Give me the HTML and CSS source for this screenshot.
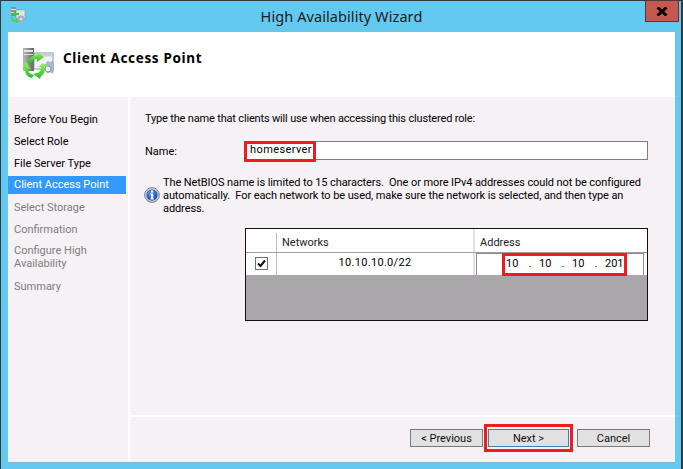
FILE: index.html
```html
<!DOCTYPE html>
<html lang="en">
<head>
<meta charset="utf-8">
<title>High Availability Wizard</title>
<link rel="stylesheet" href="styles.css">
</head>
<body>
<div class="window">
  <div class="titlebar">
    <svg class="title-icon" viewBox="0 0 16 16" width="16" height="16">
      <rect x="1" y="0" width="5" height="9" fill="#8a8f8c"/>
      <rect x="1" y="2" width="5" height="1" fill="#e6e6e6"/>
      <rect x="1" y="5" width="5" height="1" fill="#d5d5d5"/>
      <rect x="6" y="3" width="9" height="8" fill="#dfe6ea" stroke="#8b959b" stroke-width=".6"/>
      <circle cx="11" cy="12" r="3.4" fill="#9db1c2"/>
      <circle cx="11" cy="12" r="1.3" fill="#dfe6ea"/>
      <path d="M2 7 L6 4 L6 6 L9 6 L9 8 L6 8 L6 10 Z" fill="#3fc337"/>
      <path d="M1 10 L3 10 Q3 13 6 13 L6 11 L9 14 L6 16 L6 15 Q1 15 1 10 Z" fill="#4bd53c"/>
    </svg>
    <div class="title">High Availability Wizard</div>
    <div class="close"><svg viewBox="0 0 12 9" width="12" height="9"><path d="M1.500 0.500 L10.500 8.500 M10.500 0.500 L1.500 8.500" stroke="#000" stroke-width="3"/></svg></div>
  </div>
  <div class="client">
    <header class="banner">
      <svg class="banner-icon" viewBox="0 0 32 32" width="32" height="32">
        <defs>
          <linearGradient id="srv" x1="0" x2="1" y1="0" y2="0"><stop offset="0" stop-color="#b9bdb8"/><stop offset="1" stop-color="#5d625f"/></linearGradient>
          <linearGradient id="arr" x1="0" x2="0" y1="0" y2="1"><stop offset="0" stop-color="#a4ee5e"/><stop offset="1" stop-color="#1dbb2a"/></linearGradient>
        </defs>
        <rect x="1" y="1" width="11" height="23" fill="url(#srv)"/>
        <rect x="2" y="3" width="9" height="2" fill="#e2e5e2"/>
        <rect x="2" y="7" width="9" height="1" fill="#dcdedc"/>
        <rect x="12" y="6" width="19" height="16" fill="#f2f5f7" stroke="#8d979f"/>
        <rect x="12.5" y="6.5" width="18" height="3" fill="#c6d0d8"/>
        <path d="M21 18 l3.4-1 1-2.6 2.6 1 2.6-1 1 2.6 .4 3-.4 3.4-1 2.6-2.6-1-2.6 1-1-2.6-3.400-1z" fill="#a9bccd" stroke="#8ea2b4" stroke-width=".6"/>
        <circle cx="26" cy="22" r="3" fill="#eef2f6" stroke="#7f93a6"/>
        <path d="M6 15 Q8 8 15 8 L15 5 L22 10 L15 15 L15 12 Q10 12 10 16 Z" fill="url(#arr)"/>
        <path d="M0 22 L4 15 L9 22 L6 22 Q6 27 12 28 L10 31 Q3 30 3 22 Z" fill="url(#arr)"/>
        <path d="M14 26 Q19 26 19 20 L16 20 L21 16 L26 20 L23 20 Q23 28 19 29 L18 32 L11 27 Z" fill="url(#arr)"/>
      </svg>
      <h1 class="banner-title">Client Access Point</h1>
    </header>
    <div class="body">
      <nav class="nav">
        <div class="step">Before You Begin</div>
        <div class="step">Select Role</div>
        <div class="step">File Server Type</div>
        <div class="step active">Client Access Point</div>
        <div class="step off">Select Storage</div>
        <div class="step off">Confirmation</div>
        <div class="step off multi">Configure High Availability</div>
        <div class="step off">Summary</div>
      </nav>
      <main class="pane">
        <div class="content">
          <p class="intro">Type the name that clients will use when accessing this clustered role:</p>
          <div class="name-row">
            <label class="name-label">Name:</label>
            <div class="name-input">homeserver<span class="mark mark-name"></span></div>
          </div>
          <div class="info">
            <svg class="info-icon" viewBox="0 0 16 16" width="16" height="16">
              <defs><radialGradient id="ib" cx=".4" cy=".35" r=".7"><stop offset="0" stop-color="#5d9cf0"/><stop offset="1" stop-color="#123fa8"/></radialGradient></defs>
              <circle cx="8" cy="8" r="7.4" fill="#c6ccd6" stroke="#7d8794"/>
              <circle cx="8" cy="8" r="5.6" fill="url(#ib)"/>
              <rect x="7" y="3.500" width="2.200" height="2" fill="#fff"/>
              <path d="M6.300 6.500 H9.200 V11.500 H10 V12.500 H6.300 V11.500 H7 V7.500 H6.300 Z" fill="#fff"/>
            </svg>
            <p class="info-text">The NetBIOS name is limited to 15 characters.&nbsp; One or more IPv4 addresses could not be configured<br>automatically.&nbsp; For each network to be used, make sure the network is selected, and then type an<br>address.</p>
          </div>
          <div class="grid">
            <div class="grid-head">
              <div class="col-check"></div>
              <div class="col-net head-cell">Networks</div>
              <div class="col-addr head-cell">Address</div>
            </div>
            <div class="grid-row">
              <div class="col-check cell-check">
                <svg viewBox="0 0 13 13" width="13" height="13"><rect x=".5" y=".5" width="12" height="12" fill="#fff" stroke="#707070"/><path d="M3 6.500 L5.500 9 L10 3.500" fill="none" stroke="#111" stroke-width="2"/></svg>
              </div>
              <div class="col-net cell-net">10.10.10.0/22</div>
              <div class="col-addr cell-addr">
                <div class="ip">
                  <span class="oct">10</span><span class="dot">.</span><span class="oct">10</span><span class="dot">.</span><span class="oct">10</span><span class="dot">.</span><span class="oct">201</span>
                  <span class="mark mark-ip"></span>
                </div>
              </div>
            </div>
          </div>
        </div>
        <footer class="footer">
          <button class="btn">&lt; Previous</button>
          <button class="btn primary">Next &gt;<span class="mark mark-next"></span></button>
          <button class="btn">Cancel</button>
        </footer>
      </main>
    </div>
  </div>
</div>
</body>
</html>
```
FILE: styles.css
```css
* { box-sizing: border-box; }
html, body { margin: 0; padding: 0; }
body { width: 683px; height: 469px; overflow: hidden; font-family: "Roboto", "Noto Sans", sans-serif; font-size: 11px; color: #000; }
p, h1 { margin: 0; }

.window { width: 683px; height: 469px; background: #63c9f0; border-top: 1px solid #2f3a40; border-left: 1px solid #2f3a40; border-right: 2px solid #2f3a40; display: flex; flex-direction: column; padding: 0 6px 7px 7px; }

.titlebar { height: 30px; flex: none; display: flex; align-items: flex-start; position: relative; }
.title-icon { margin: 6px 0 0 2px; }
.title { position: absolute; left: 0; right: 0; top: 5px; text-align: center; font-family: "Noto Sans", sans-serif; font-size: 14.5px; line-height: 20px; letter-spacing: .08px; color: #1c1c1c; }
.close { position: absolute; top: -1px; right: -4px; width: 34px; height: 22px; background: #c75850; border: 1px solid #4d3a3a; display: flex; align-items: center; justify-content: center; }

.client { flex: 1; min-height: 0; display: flex; flex-direction: column; background: #fff; border-top: 1px solid #8bb8cc; box-shadow: 0 1px 0 #7fb8d4; }
.banner { height: 63px; flex: none; display: flex; align-items: flex-start; background: #fff; padding: 15px 0 0 14px; }
.banner-title { font-family: "Noto Sans", sans-serif; font-size: 13.5px; font-weight: 700; margin: 2px 0 0 9px; line-height: 18px; letter-spacing: .65px; }

.body { flex: 1; min-height: 0; display: flex; gap: 2px; padding-top: 2px; background: #fff; }
.nav { width: 120px; flex: none; background: #f5f1f5; padding-top: 13px; }
.step { height: 22px; line-height: 20px; padding: 0 0 2px 6px; width: 118px; }
.step.active { background: #3399ff; color: #fff; height: 18px; line-height: 18px; margin-bottom: 4px; padding-bottom: 0; }
.step.off { color: #7d7d7d; }
.step.multi { height: 35px; line-height: 13px; padding: 2px 0 0 6px; }

.pane { flex: 1; min-width: 0; display: flex; flex-direction: column; background: #f5f1f5; }
.content { flex: 1; min-height: 0; padding: 13px 27px 0 15px; border-bottom: 2px solid #fff; }
.intro { line-height: 18px; letter-spacing: -.17px; }
.name-row { display: flex; margin-top: 13px; }
.name-label { width: 100px; height: 19px; line-height: 18px; padding-top: 2px; }
.name-input { position: relative; flex: 1; height: 19px; background: #fff; border: 1px solid #7e7e7e; padding-left: 4px; line-height: 16px; letter-spacing: .4px; color: #000; }

.info { display: flex; margin-top: 15px; }
.info-icon { flex: none; margin: 12px 0 0 -1px; }
.info-text { margin-left: 3px; line-height: 13px; padding-top: 1px; white-space: nowrap; letter-spacing: -.09px; }

.grid { margin: 13px 0 0 100px; height: 93px; background: #a9a7a9; border: 1px solid #111; }
.grid-head { display: flex; height: 23px; background: #fff; padding-top: 4px; }
.grid-row { display: flex; height: 23px; background: #fff; border-top: 1px solid #a0a0a0; }
.col-check { width: 30px; flex: none; border-right: 1px solid #bdbdbd; margin-left: 1px; }
.col-net { width: 198px; flex: none; border-right: 2px solid #e2e2e2; }
.col-addr { flex: 1; }
.head-cell { padding-left: 5px; line-height: 19px; margin-top: -4px; padding-top: 4px; color: #222; }
.cell-check { display: flex; align-items: center; justify-content: center; padding-bottom: 1px; }
.cell-net { text-align: center; line-height: 20px; letter-spacing: .3px; }
.cell-addr { padding: 0 3px 0 1px; }
.ip { position: relative; height: 100%; border-left: 1px solid #8a8a8a; border-right: 1px solid #8a8a8a; border-top: 1px solid #8a8a8a; background: #fff; display: flex; padding-left: 29px; line-height: 20px; }
.oct { width: 15px; }
.oct:last-of-type { width: 24px; }
.dot { width: 18px; text-align: center; }

.mark { position: absolute; border: 3px solid #ed1c24; pointer-events: none; }
.mark-name { left: -2px; top: -1px; width: 72px; height: 21px; }
.mark-ip { left: 25px; top: -1px; width: 125px; height: 23px; }
.mark-next { left: -5px; top: -6px; width: 89px; height: 28px; }

.footer { height: 45px; flex: none; display: flex; align-items: flex-start; padding: 12px 0 0 280px; }
.btn { position: relative; width: 73px; height: 18px; background: #e1e1e1; border: 1px solid #7a7a7a; font: inherit; color: #111; line-height: 15px; padding: 0; }
.btn.primary { width: 81px; margin: 0 8px 0 5px; border-color: #3c7fb1; }
```
